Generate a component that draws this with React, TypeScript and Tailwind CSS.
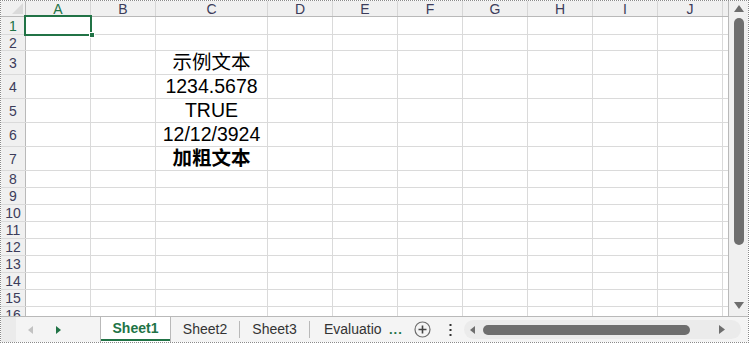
const cols = [
  { name: 'A', w: 'w-[65px]' },
  { name: 'B', w: 'w-[65px]' },
  { name: 'C', w: 'w-[112px]' },
  { name: 'D', w: 'w-[65px]' },
  { name: 'E', w: 'w-[65px]' },
  { name: 'F', w: 'w-[65px]' },
  { name: 'G', w: 'w-[65px]' },
  { name: 'H', w: 'w-[65px]' },
  { name: 'I', w: 'w-[65px]' },
  { name: 'J', w: 'w-[65px]' },
]

const rows: { n: number; h: string; c?: string; bold?: boolean }[] = [
  { n: 1, h: 'h-[18px]' },
  { n: 2, h: 'h-[16px]' },
  { n: 3, h: 'h-[24px]', c: '示例文本' },
  { n: 4, h: 'h-[24px]', c: '1234.5678' },
  { n: 5, h: 'h-[24px]', c: 'TRUE' },
  { n: 6, h: 'h-[24px]', c: '12/12/3924' },
  { n: 7, h: 'h-[24px]', c: '加粗文本', bold: true },
  { n: 8, h: 'h-[17px]' },
  { n: 9, h: 'h-[17px]' },
  { n: 10, h: 'h-[17px]' },
  { n: 11, h: 'h-[17px]' },
  { n: 12, h: 'h-[17px]' },
  { n: 13, h: 'h-[17px]' },
  { n: 14, h: 'h-[17px]' },
  { n: 15, h: 'h-[17px]' },
  { n: 16, h: 'h-[17px]' },
]

const font = "font-['Liberation_Sans','Noto_Sans_CJK_SC',sans-serif]"

const HeaderRow = () => (
  <div className="flex h-[16px] shrink-0 border-b border-[#b9b9b9] bg-[#f0f0f0]">
    <div className="relative w-[25px] shrink-0 border-r border-[#b9b9b9]">
      <svg className="absolute bottom-[2px] right-[2px]" width="11" height="11" viewBox="0 0 11 11">
        <polygon points="11,0 11,11 0,11" fill="#dadada" />
      </svg>
    </div>
    {cols.map((c) => (
      <div
        key={c.name}
        className={`${c.w} shrink-0 border-r border-[#d6d6d6] flex items-center justify-center text-[14px] leading-none ${
          c.name === 'A' ? 'text-[#217346]' : 'text-[#3c3c5a]'
        }`}
      >
        {c.name}
      </div>
    ))}
    <div className="w-[5px] shrink-0" />
  </div>
)

const ScrollV = () => (
  <div className="w-[19px] shrink-0 bg-[#f0f0f0] flex flex-col items-center">
    <svg className="mt-[4px]" width="10" height="7" viewBox="0 0 10 7">
      <polygon points="5,0 10,7 0,7" fill="#6e6e6e" />
    </svg>
    <div className="mt-[6px] h-[227px] w-[10px] rounded-full bg-[#6e6e6e]" />
    <div className="mt-auto mb-[3px] flex h-[16px] w-[19px] items-center justify-center rounded-b-full bg-[#f0f0f0]">
      <svg width="10" height="7" viewBox="0 0 10 7">
        <polygon points="0,0 10,0 5,7" fill="#6e6e6e" />
      </svg>
    </div>
  </div>
)

const TabBar = () => (
  <div className={`flex h-[26px] shrink-0 border-t border-[#b9b9b9] bg-[#f4f4f4] ${font}`}>
    <div className="w-[15px] shrink-0 bg-[#ebebeb]" />
    <div className="flex w-[84px] shrink-0 items-center">
      <svg className="ml-[12px]" width="5" height="8" viewBox="0 0 5 8">
        <polygon points="5,0 5,8 0,4" fill="#c2c2c2" />
      </svg>
      <svg className="ml-[23px]" width="5" height="8" viewBox="0 0 5 8">
        <polygon points="0,0 5,4 0,8" fill="#217346" />
      </svg>
    </div>
    <div className="flex w-[71px] shrink-0 flex-col border-x border-[#b9b9b9] bg-white">
      <div className="flex flex-1 items-center justify-center text-[14px] font-bold text-[#217346]">Sheet1</div>
      <div className="mb-[1px] h-[2px] bg-[#217346]" />
    </div>
    <div className="flex w-[68px] shrink-0 items-center justify-center text-[14px] text-[#333]">Sheet2</div>
    <div className="my-[4px] w-px shrink-0 bg-[#b9b9b9]" />
    <div className="flex w-[69px] shrink-0 items-center justify-center text-[14px] text-[#333]">Sheet3</div>
    <div className="my-[4px] w-px shrink-0 bg-[#b9b9b9]" />
    <div className="flex w-[77px] shrink-0 items-center overflow-hidden pl-[14px] text-[14px] text-[#333] whitespace-nowrap">
      Evaluatio
    </div>
    <div className="flex w-[21px] shrink-0 items-center pl-[2px] text-[13px] font-bold tracking-[1px] text-[#217346]">...</div>
    <div className="flex w-[28px] shrink-0 items-center justify-center">
      <svg width="17" height="17" viewBox="0 0 17 17">
        <circle cx="8.5" cy="8.5" r="7.5" fill="none" stroke="#6e6e6e" strokeWidth="1.2" />
        <path d="M8.5 4.5v8M4.5 8.5h8" stroke="#444" strokeWidth="1.6" />
      </svg>
    </div>
    <div className="flex w-[28px] shrink-0 items-center justify-center">
      <svg width="3" height="12" viewBox="0 0 3 12">
        <rect x="0.5" y="0" width="2" height="2" fill="#333" />
        <rect x="0.5" y="5" width="2" height="2" fill="#333" />
        <rect x="0.5" y="10" width="2" height="2" fill="#333" />
      </svg>
    </div>
    <div className="my-[3px] flex w-[277px] shrink-0 items-center rounded-full bg-[#ebebeb]">
      <svg className="ml-[6px]" width="5" height="8" viewBox="0 0 5 8">
        <polygon points="5,0 5,8 0,4" fill="#6e6e6e" />
      </svg>
      <div className="ml-[8px] h-[10px] w-[207px] rounded-full bg-[#6e6e6e]" />
      <svg className="ml-[29px]" width="6" height="9" viewBox="0 0 6 9">
        <polygon points="0,0 6,4.5 0,9" fill="#6e6e6e" />
      </svg>
    </div>
  </div>
)

export default function App() {
  return (
    <div className={`flex h-[343px] w-[749px] flex-col overflow-hidden border border-dotted border-[#8a8a8a] bg-white ${font}`}>
      <div className="flex h-[315px] shrink-0">
        <div className="relative flex w-[728px] shrink-0 flex-col overflow-hidden border-r border-[#b9b9b9]">
          <HeaderRow />
          {rows.map((r) => (
            <div key={r.n} className={`flex ${r.h} shrink-0 border-b border-[#dadada]`}>
              <div
                className={`w-[25px] shrink-0 border-r border-[#b9b9b9] bg-[#f0f0f0] flex items-center justify-center text-[14px] leading-none ${
                  r.n === 1 ? 'text-[#217346]' : 'text-[#3c3c5a]'
                }`}
              >
                {r.n}
              </div>
              {cols.map((c) => (
                <div
                  key={c.name}
                  className={`${c.w} shrink-0 border-r border-[#dadada] flex items-end justify-center overflow-visible whitespace-nowrap text-[19.5px] leading-[23px] text-black ${
                    r.bold ? 'font-bold' : ''
                  }`}
                >
                  {c.name === 'C' ? r.c : ''}
                </div>
              ))}
              <div className="w-[5px] shrink-0" />
            </div>
          ))}
          <div className="absolute left-[23px] top-[14px] h-[21px] w-[68px] border-2 border-[#217346]" />
          <div className="absolute left-[88px] top-[31px] h-[6px] w-[6px] border border-white bg-[#217346]" />
        </div>
        <ScrollV />
      </div>
      <TabBar />
    </div>
  )
}
